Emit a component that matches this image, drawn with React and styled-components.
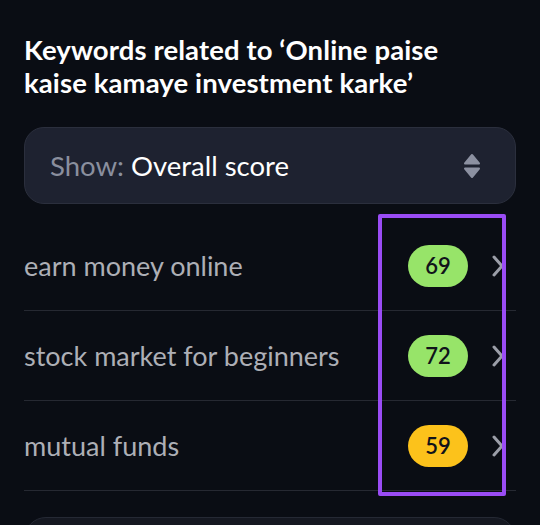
import React from 'react'
import styled, { createGlobalStyle } from 'styled-components'

const GlobalStyle = createGlobalStyle`
  html, body {
    margin: 0;
    padding: 0;
    background: #0a0d14;
  }
  body {
    font-family: Lato, 'Noto Sans', sans-serif;
    -webkit-font-smoothing: antialiased;
  }
`

const keywords = [
  { label: 'earn money online', score: 69, tone: 'good' },
  { label: 'stock market for beginners', score: 72, tone: 'good' },
  { label: 'mutual funds', score: 59, tone: 'mid' },
]

function Chevron() {
  return (
    <svg width="12" height="22" viewBox="0 0 12 22" fill="none">
      <path
        d="M2 2 L10 11 L2 20"
        stroke="#9b9ea8"
        strokeWidth="3"
        strokeLinecap="round"
        strokeLinejoin="round"
      />
    </svg>
  )
}

function SortIcon() {
  return (
    <svg width="18" height="26" viewBox="0 0 18 26">
      <path
        d="M9 2 L16 10.5 L2 10.5 Z"
        fill="#8c91a1"
        stroke="#8c91a1"
        strokeWidth="2"
        strokeLinejoin="round"
      />
      <path
        d="M2 15.5 L16 15.5 L9 24 Z"
        fill="#8c91a1"
        stroke="#8c91a1"
        strokeWidth="2"
        strokeLinejoin="round"
      />
    </svg>
  )
}

export default function App() {
  return (
    <Page>
      <GlobalStyle />
      <Title>Keywords related to ‘Online paise kaise kamaye investment karke’</Title>
      <Select>
        <SelectText>
          <Muted>Show:</Muted> Overall score
        </SelectText>
        <SortIcon />
      </Select>
      <List>
        {keywords.map((k) => (
          <Row key={k.label}>
            <Label>{k.label}</Label>
            <Score tone={k.tone}>{k.score}</Score>
            <ChevronWrap>
              <Chevron />
            </ChevronWrap>
          </Row>
        ))}
        <Highlight />
      </List>
      <NextCard />
    </Page>
  )
}

const Page = styled.div`
  height: 525px;
  overflow: hidden;
  padding: 33px 24px 0;
  box-sizing: border-box;
  color: #fff;
`
const Title = styled.h1`
  margin: 0;
  font-size: 27.5px;
  line-height: 33px;
  font-weight: 700;
  letter-spacing: 0.1px;
  max-width: 460px;
`
const Select = styled.div`
  margin-top: 28px;
  height: 77px;
  box-sizing: border-box;
  border-radius: 20px;
  background: #1e2230;
  border: 1px solid #2b2f3d;
  display: flex;
  align-items: center;
  justify-content: space-between;
  padding: 0 34px 0 25px;
`
const SelectText = styled.div`
  font-size: 27.5px;
  color: #fff;
`
const Muted = styled.span`
  color: #8a8f9e;
`
const List = styled.div`
  position: relative;
  margin-top: 17px;
`
const Row = styled.div`
  display: flex;
  align-items: center;
  height: 90px;
  box-sizing: border-box;
  border-bottom: 1px solid #262932;
  padding-right: 12px;
`
const Label = styled.div`
  flex: 1;
  font-size: 27px;
  color: #adafb6;
`
const Score = styled.div`
  width: 60px;
  height: 42px;
  border-radius: 21px;
  display: flex;
  align-items: center;
  justify-content: center;
  font-size: 22px;
  font-weight: 600;
  color: #10131a;
  background: ${(p) => (p.tone === 'mid' ? '#fcc21b' : '#97e469')};
`
const ChevronWrap = styled.div`
  margin-left: 24px;
  display: flex;
`
const Highlight = styled.div`
  position: absolute;
  left: 354px;
  top: -7px;
  width: 128px;
  height: 282px;
  box-sizing: border-box;
  border: 4px solid #9a4cf5;
  border-radius: 2px;
  pointer-events: none;
`
const NextCard = styled.div`
  margin-top: 26px;
  height: 80px;
  border-radius: 22px;
  background: #151821;
  border: 1px solid #252934;
`
